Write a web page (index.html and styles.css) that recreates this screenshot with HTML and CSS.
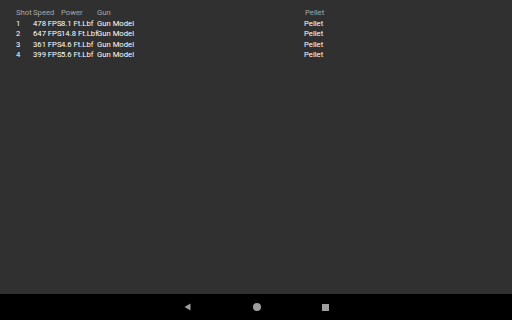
FILE: index.html
```html
<!DOCTYPE html>
<html lang="en">
<head>
    <meta charset="UTF-8">
    <meta name="viewport" content="width=device-width, initial-scale=1.0">
    <title>Shots</title>
    <link rel="stylesheet" href="styles.css">
</head>
<body>

<div class="screen">
    <div class="content">
        <div class="shot-table">
            <div class="row header">
                <span>Shot</span>
                <span>Speed</span>
                <span>Power</span>
                <span>Gun</span>
                <span class="pellet-head">Pellet</span>
            </div>
            <div class="row">
                <span>1</span>
                <span>478 FPS</span>
                <span>8.1 Ft.Lbf</span>
                <span>Gun Model</span>
                <span>Pellet</span>
            </div>
            <div class="row">
                <span>2</span>
                <span>647 FPS</span>
                <span>14.8 Ft.Lbf</span>
                <span>Gun Model</span>
                <span>Pellet</span>
            </div>
            <div class="row">
                <span>3</span>
                <span>361 FPS</span>
                <span>4.6 Ft.Lbf</span>
                <span>Gun Model</span>
                <span>Pellet</span>
            </div>
            <div class="row">
                <span>4</span>
                <span>399 FPS</span>
                <span>5.6 Ft.Lbf</span>
                <span>Gun Model</span>
                <span>Pellet</span>
            </div>
        </div>
    </div>

    <div class="nav-bar">
        <svg class="nav-icon" width="8" height="8" viewBox="0 0 8 8">
            <path d="M6.5 0.5 L0.5 4 L6.5 7.5 Z" fill="#9e9e9e"/>
        </svg>
        <div class="nav-home"></div>
        <div class="nav-recent"></div>
    </div>
</div>

</body>
</html>
```

FILE: styles.css
```css
body {
    margin: 0;
    background-color: #303030;
    font-family: Roboto, "Liberation Sans", sans-serif;
    font-size: 7.7px;
}
.screen {
    height: 320px;
    display: flex;
    flex-direction: column;
}
.content {
    flex: 1;
    padding: 8px 0 0 16px;
}
.row {
    display: grid;
    grid-template-columns: 17px 28px 36px 207px auto;
    line-height: 10.5px;
    color: #ffffff;
    white-space: nowrap;
}
.header {
    color: #a8a8a8;
}
.pellet-head {
    padding-left: 1px;
}
.nav-bar {
    height: 26px;
    background-color: #000000;
    display: flex;
    justify-content: center;
    align-items: center;
    gap: 61px;
}
.nav-home {
    width: 8px;
    height: 8px;
    border-radius: 50%;
    background-color: #9e9e9e;
}
.nav-recent {
    width: 7px;
    height: 7px;
    background-color: #9e9e9e;
}
```
